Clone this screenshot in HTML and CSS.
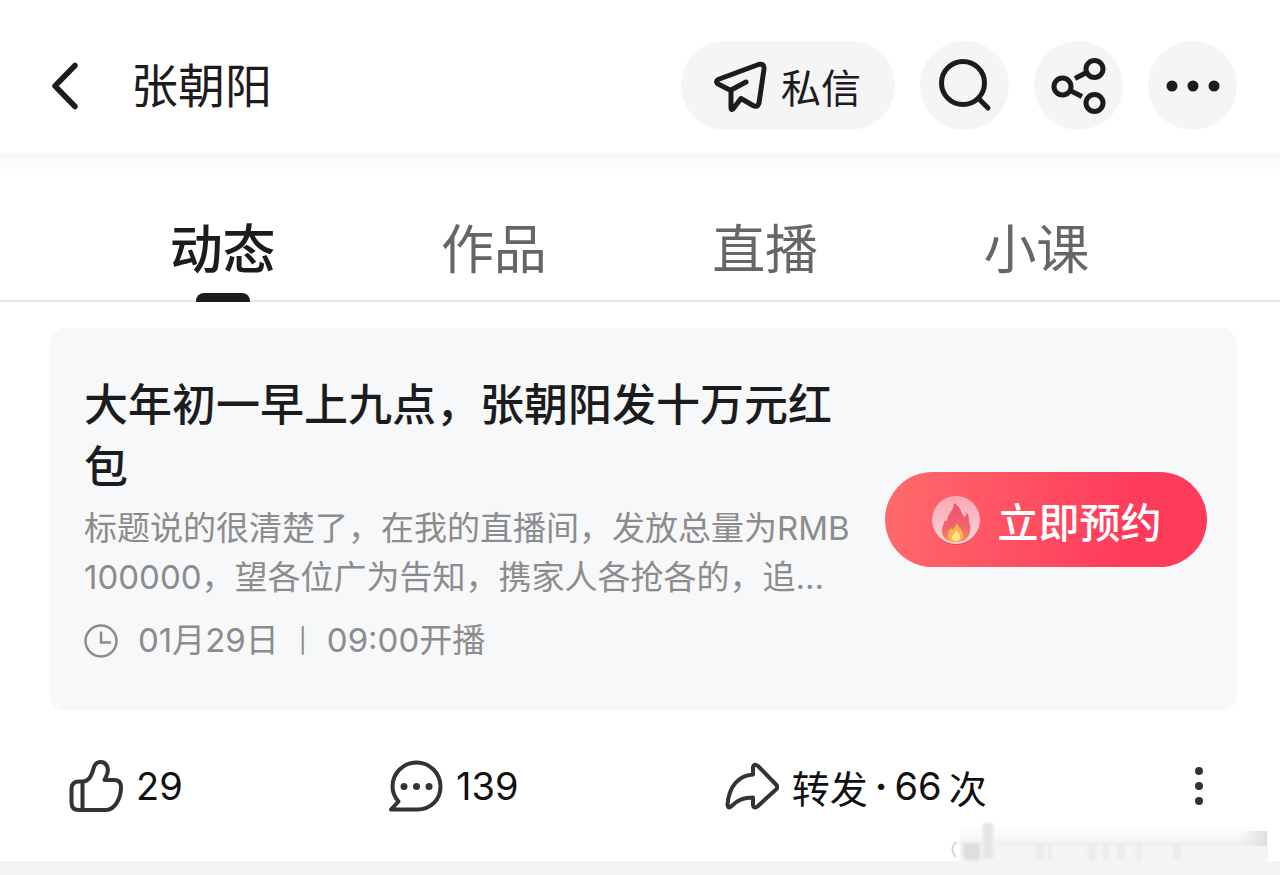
FILE: index.html
```html
<!DOCTYPE html>
<html lang="zh-CN">
<head>
  <meta charset="UTF-8" />
  <meta name="viewport" content="width=device-width, initial-scale=1.0"/>
  <title>张朝阳</title>
  <link rel="stylesheet" href="styles.css">
</head>
<body>
  <header class="header">
    <button class="back" aria-label="返回">
      <svg width="32" height="50" viewBox="0 0 32 50"><path d="M27 4.500L7 25l20 20.500" fill="none" stroke="currentColor" stroke-width="5.500" stroke-linecap="round" stroke-linejoin="round"/></svg>
    </button>
    <h1 class="name">张朝阳</h1>
    <div class="header-actions">
      <button class="pill">
        <svg width="54" height="54" viewBox="0 0 54 54" fill="none" stroke="currentColor" stroke-width="5" stroke-linecap="round" stroke-linejoin="round">
          <path d="M5 20.500 45.500 5.500Q51.500 4 51 10L46 44Q44.500 49 40 46.500L28 39.500 20 50Q18 51.500 18 49V31.500L5 25Q2 22.500 5 20.500Z"/>
          <path d="M18 31 33 23"/>
        </svg>
        <span>私信</span>
      </button>
      <button class="round" aria-label="搜索">
        <svg width="56" height="56" viewBox="0 0 56 56" fill="none" stroke="currentColor" stroke-width="5" stroke-linecap="round"><circle cx="26" cy="25" r="21.500"/><path d="M42 41l9 9"/></svg>
      </button>
      <button class="round" aria-label="分享">
        <svg width="56" height="58" viewBox="0 0 56 58" fill="none" stroke="currentColor" stroke-width="5">
          <circle cx="11.500" cy="29.500" r="8.500"/><circle cx="43.500" cy="12" r="8.500"/><circle cx="43.500" cy="46" r="8.500"/>
          <path d="M24 21.500 35.500 15.500M19 33.500 31 39.500"/>
        </svg>
      </button>
      <button class="round" aria-label="更多">
        <svg width="56" height="12" viewBox="0 0 56 12" fill="currentColor"><circle cx="7" cy="6" r="5.500"/><circle cx="28" cy="6" r="5.500"/><circle cx="49" cy="6" r="5.500"/></svg>
      </button>
    </div>
  </header>

  <nav class="tabs">
    <a class="tab active" href="#">动态</a>
    <a class="tab" href="#">作品</a>
    <a class="tab" href="#">直播</a>
    <a class="tab" href="#">小课</a>
  </nav>

  <main class="post">
    <section class="card">
      <div class="card-text">
        <h2 class="card-title">大年初一早上九点，张朝阳发十万元红包</h2>
        <p class="card-desc">标题说的很清楚了，在我的直播间，发放总量为RMB 100000，望各位广为告知，携家人各抢各的，追…</p>
        <div class="card-time">
          <svg width="34" height="34" viewBox="0 0 34 34" fill="none" stroke="currentColor" stroke-width="2.500"><circle cx="17" cy="17" r="15.500"/><path d="M17 7.500V18.500H27"/></svg>
          <span>01月29日</span><span class="divider">|</span><span>09:00开播</span>
        </div>
      </div>
      <button class="book">
        <svg width="50" height="50" viewBox="0 0 50 50">
          <defs>
            <linearGradient id="disc" x1="0" y1="0" x2="0" y2="1">
              <stop offset="0" stop-color="#fba9b4"/><stop offset="1" stop-color="#fdd0d8"/>
            </linearGradient>
            <linearGradient id="flame" x1="0" y1="0" x2="0" y2="1">
              <stop offset="0" stop-color="#ee4f78"/><stop offset="0.600" stop-color="#f0646c"/><stop offset="1" stop-color="#f58f5c"/>
            </linearGradient>
          </defs>
          <circle cx="25" cy="26" r="24" fill="#b84a5c" opacity="0.700"/>
          <circle cx="25" cy="25" r="24" fill="url(#disc)"/>
          <path d="M23 8c4 3 6 5 7 8 1 3 2 5 4 6 1-1 1.500-3 1-5 3 3 3 6 3 9 1 4 2 7 1 11-1 6-6 10-14 10s-14-4-14-11c0-5 2-7 3-11 .500 1 1 1.500 2 1 0-3 1-5 3-8 2-3 4-6 4-10z" fill="url(#flame)"/>
          <path d="M26 28c1 4 6 7 6 12 0 5-3 7-7 7s-8-2-8-7c0-3 1-5 3-7 .500 1 1 1.500 2 1 2-2 3-4 4-6z" fill="#fbb34f"/>
          <path d="M25 35c2 3 5 5 4 8-1 4-7 4-8 0 0-3 3-5 4-8z" fill="#fde58a"/>
        </svg>
        <span>立即预约</span>
      </button>
    </section>

    <div class="actions">
      <button class="action">
        <svg width="54" height="54" viewBox="0 0 54 54" fill="none" stroke="#333" stroke-width="4" stroke-linecap="round" stroke-linejoin="round">
          <path d="M13.500 22.500H10Q2.500 22.500 2.500 30V43.500Q2.500 51 10 51H37C46 51 52 39 52 28Q52 21 45 21H35.500C38 16 40 12 38 7 35 1 27 2 25 8 23.500 13 21.500 22.500 13.500 22.500V51"/>
        </svg>
        <span>29</span>
      </button>
      <button class="action">
        <svg width="54" height="54" viewBox="0 0 54 54" fill="none" stroke="#333" stroke-width="4" stroke-linecap="round" stroke-linejoin="round">
          <path d="M2 50.500H28C42 50.500 51.500 40.500 51.500 27.500A24 24 0 0 0 3.500 27.500C3.500 34 6 38.500 9.500 42.500Z"/>
          <g fill="#333" stroke="none"><circle cx="15" cy="27.500" r="3.500"/><circle cx="27.500" cy="27.500" r="3.500"/><circle cx="40" cy="27.500" r="3.500"/></g>
        </svg>
        <span>139</span>
      </button>
      <button class="action">
        <svg width="54" height="54" viewBox="0 0 54 54" fill="none" stroke="#333" stroke-width="4" stroke-linecap="round" stroke-linejoin="round">
          <path d="M28 15.500V8Q29 4 33 7L51.500 26Q53 28 51.500 30L33 47Q29 50.500 28 46V38.500C19 38.500 13 40.500 6 47.500Q2.500 50 2.500 45.500C4 28 13 16.500 28 15.500Z"/>
        </svg>
        <span class="repost"><span>转发</span><b>·</b><span>66</span><span>次</span></span>
      </button>
      <button class="action" aria-label="更多操作">
        <svg width="12" height="40" viewBox="0 0 12 40" fill="#333"><circle cx="6" cy="5" r="4"/><circle cx="6" cy="20" r="4"/><circle cx="6" cy="35" r="4"/></svg>
      </button>
      <svg class="smudge" width="320" height="42" viewBox="0 0 320 42">
        <defs>
          <linearGradient id="fade" x1="0" y1="0" x2="0" y2="1"><stop offset="0" stop-color="#f2f2f2" stop-opacity="0"/><stop offset="0.600" stop-color="#f4f4f4"/><stop offset="1" stop-color="#f6f6f6"/></linearGradient>
          <linearGradient id="corner" x1="0" y1="0" x2="1" y2="0"><stop offset="0" stop-color="#e2e2e2" stop-opacity="0"/><stop offset="1" stop-color="#dedede"/></linearGradient>
          <filter id="soft"><feGaussianBlur stdDeviation="1.500"/></filter>
        </defs>
        <rect x="10" y="4" width="308" height="36" fill="url(#fade)"/>
        <g filter="url(#soft)">
          <path d="M33 2h10v36h-10z" fill="#e4e4e4"/>
          <path d="M4 21h312v2h-312z" fill="#ececec"/>
          <path d="M12 22h18v17H14z" fill="#dedede"/>
          <path d="M86 22h8v17h-8zM98 22h4v17h-4zM138 22h8v17h-8zM153 22h6v17h-6zM167 22h8v17h-8zM186 22h6v17h-6zM223 22h8v17h-8z" fill="#ebebeb"/>
        </g>
        <path d="M288 10h29v15h-29z" fill="url(#corner)"/>
        <path d="M6 21q-7 7 0 15" fill="none" stroke="#d8d8d8" stroke-width="2"/>
      </svg>
    </div>
  </main>
</body>
</html>
```

FILE: styles.css
```css
* {
  box-sizing: border-box;
}

body {
  margin: 0;
  min-height: 100vh;
  display: flex;
  flex-direction: column;
  background: #f3f4f6;
  color: #1c1c1e;
  font-family: Inter, 'Noto Sans CJK SC', sans-serif;
}

button {
  padding: 0;
  border: none;
  background: none;
  color: inherit;
  font-family: inherit;
  cursor: pointer;
}

svg {
  display: block;
  flex-shrink: 0;
}

.header {
  display: flex;
  align-items: center;
  padding: 41px 43px 23px 48px;
  background: #fff;
}

.name {
  margin: 0 auto 0 51px;
  font-size: 47px;
  line-height: 64px;
  font-weight: 400;
}

.header-actions {
  display: flex;
  gap: 25px;
}

.pill,
.round {
  display: flex;
  align-items: center;
  justify-content: center;
  height: 89px;
  border-radius: 45px;
  background: #f5f5f5;
}

.pill {
  gap: 14px;
  padding: 0 34px 0 32px;
  font-size: 40px;
}

.round {
  width: 89px;
}

.tabs {
  display: flex;
  height: 149px;
  padding: 0 108px 0 87px;
  border-bottom: 2px solid #e8e8ea;
  background: linear-gradient(#f8f8f8, #fff 24px);
}

.tab {
  position: relative;
  flex: 1;
  padding-top: 57px;
  color: #666;
  font-size: 53px;
  line-height: 80px;
  text-align: center;
  text-decoration: none;
}

.tab.active {
  color: #1c1c1e;
  font-weight: 500;
}

.tab.active::after {
  content: '';
  position: absolute;
  left: 50%;
  bottom: -2px;
  width: 54px;
  height: 9px;
  margin-left: -27px;
  border-radius: 8px 8px 0 0;
  background: #1c1c1e;
}

.post {
  padding: 26px 0 0;
  background: #fff;
}

.card {
  display: flex;
  align-items: center;
  gap: 34px;
  margin: 0 43px 0 50px;
  padding: 46px 30px 46px 34px;
  border-radius: 16px;
  background: #f6f8fa;
}

.card-text {
  flex: 1;
  min-width: 0;
}

.card-title {
  margin: 0 0 6px;
  font-size: 44px;
  line-height: 62px;
  font-weight: 500;
}

.card-desc {
  margin: 0 0 14px;
  color: #8c8c8c;
  font-size: 33px;
  line-height: 49px;
}

.card-time {
  display: flex;
  align-items: center;
  gap: 20px;
  color: #8c8c8c;
  font-size: 33px;
  line-height: 49px;
}

.divider {
  font-size: 24px;
}

.book {
  display: flex;
  align-items: center;
  justify-content: center;
  gap: 17px;
  width: 322px;
  height: 95px;
  border-radius: 48px;
  background: linear-gradient(100deg, #ff6b6b, #ff3b5c 75%);
  color: #fff;
  font-size: 41px;
  font-weight: 500;
}

.actions {
  position: relative;
  display: flex;
  align-items: center;
  justify-content: space-between;
  height: 150px;
  padding: 0 75px 0 69px;
}

.action {
  display: flex;
  align-items: center;
  gap: 13px;
  color: #111;
  font-size: 38px;
}

.repost {
  display: flex;
  align-items: center;
  gap: 7px;
}

.smudge {
  position: absolute;
  right: 10px;
  bottom: -2px;
}
```
